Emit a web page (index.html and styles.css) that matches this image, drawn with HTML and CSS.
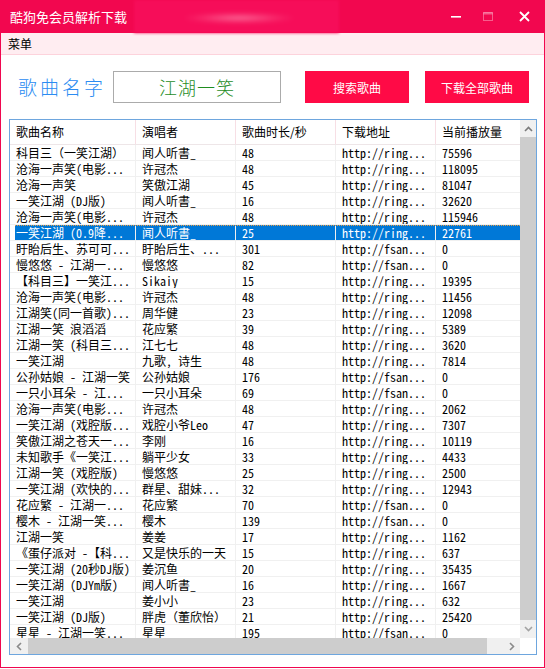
FILE: index.html
```html
<!DOCTYPE html>
<html lang="zh-CN">
<head>
<meta charset="utf-8">
<title>酷狗免会员解析下载</title>
<link rel="stylesheet" href="styles.css">
</head>
<body>
<div class="window">
  <div class="titlebar">
    <span class="title">酷狗免会员解析下载</span>
    <div class="blur"><div class="blur-glow"></div></div>
    <div class="controls">
      <div class="ctl ctl-min"><svg width="10" height="10" viewBox="0 0 10 10"><rect x="0" y="4" width="10" height="1.6" fill="#fff"/></svg></div>
      <div class="ctl ctl-max"><svg width="10" height="10" viewBox="0 0 10 10"><rect x="0.5" y="0.5" width="9" height="8" fill="none" stroke="rgba(255,255,255,0.35)" stroke-width="1"/><rect x="0.5" y="0.5" width="9" height="2" fill="rgba(255,255,255,0.35)"/></svg></div>
      <div class="ctl ctl-close"><svg width="11" height="11" viewBox="0 0 11 11"><path d="M1 1 L10 10 M10 1 L1 10" stroke="#fff" stroke-width="1.8" fill="none"/></svg></div>
    </div>
  </div>
  <div class="menubar"><span class="menu-item">菜单</span></div>
  <div class="content">
    <div class="searchrow">
      <div class="label">歌曲名字</div>
      <div class="textbox">江湖一笑</div>
      <div class="btn btn-search">搜索歌曲</div>
      <div class="btn btn-all">下载全部歌曲</div>
    </div>
    <div class="list">
      <div class="viewport">
        <div class="hrow">
          <div class="hc c1">歌曲名称</div>
          <div class="hc c2">演唱者</div>
          <div class="hc c3">歌曲时长/秒</div>
          <div class="hc c4">下载地址</div>
          <div class="hc c5">当前播放量</div>
        </div>
        <div class="row"><div class="c c1 fw">科目三（一笑江湖）</div><div class="c c2">闻人听書_</div><div class="c c3">48</div><div class="c c4">http://ring...</div><div class="c c5">75596</div></div>
        <div class="row"><div class="c c1">沧海一声笑(电影...</div><div class="c c2">许冠杰</div><div class="c c3">48</div><div class="c c4">http://ring...</div><div class="c c5">118095</div></div>
        <div class="row"><div class="c c1">沧海一声笑</div><div class="c c2">笑傲江湖</div><div class="c c3">45</div><div class="c c4">http://ring...</div><div class="c c5">81047</div></div>
        <div class="row"><div class="c c1">一笑江湖 (DJ版)</div><div class="c c2">闻人听書_</div><div class="c c3">16</div><div class="c c4">http://ring...</div><div class="c c5">32620</div></div>
        <div class="row"><div class="c c1">沧海一声笑(电影...</div><div class="c c2">许冠杰</div><div class="c c3">48</div><div class="c c4">http://ring...</div><div class="c c5">115946</div></div>
        <div class="row sel"><div class="c c1">一笑江湖 (0.9降...</div><div class="c c2">闻人听書_</div><div class="c c3">25</div><div class="c c4">http://ring...</div><div class="c c5">22761</div></div>
        <div class="row"><div class="c c1">盱眙后生、苏可可...</div><div class="c c2">盱眙后生、...</div><div class="c c3">301</div><div class="c c4">http://fsan...</div><div class="c c5">0</div></div>
        <div class="row"><div class="c c1">慢悠悠 - 江湖一...</div><div class="c c2">慢悠悠</div><div class="c c3">82</div><div class="c c4">http://fsan...</div><div class="c c5">0</div></div>
        <div class="row"><div class="c c1">【科目三】一笑江...</div><div class="c c2">Sikaiy</div><div class="c c3">15</div><div class="c c4">http://ring...</div><div class="c c5">19395</div></div>
        <div class="row"><div class="c c1">沧海一声笑(电影...</div><div class="c c2">许冠杰</div><div class="c c3">48</div><div class="c c4">http://ring...</div><div class="c c5">11456</div></div>
        <div class="row"><div class="c c1">江湖笑(同一首歌)...</div><div class="c c2">周华健</div><div class="c c3">23</div><div class="c c4">http://ring...</div><div class="c c5">12098</div></div>
        <div class="row"><div class="c c1">江湖一笑 浪滔滔</div><div class="c c2">花应繁</div><div class="c c3">39</div><div class="c c4">http://ring...</div><div class="c c5">5389</div></div>
        <div class="row"><div class="c c1">江湖一笑 (科目三...</div><div class="c c2">江七七</div><div class="c c3">48</div><div class="c c4">http://ring...</div><div class="c c5">3620</div></div>
        <div class="row"><div class="c c1">一笑江湖</div><div class="c c2">九歌, 诗生</div><div class="c c3">48</div><div class="c c4">http://ring...</div><div class="c c5">7814</div></div>
        <div class="row"><div class="c c1">公孙姑娘 - 江湖一笑</div><div class="c c2">公孙姑娘</div><div class="c c3">176</div><div class="c c4">http://fsan...</div><div class="c c5">0</div></div>
        <div class="row"><div class="c c1">一只小耳朵 - 江...</div><div class="c c2">一只小耳朵</div><div class="c c3">69</div><div class="c c4">http://fsan...</div><div class="c c5">0</div></div>
        <div class="row"><div class="c c1">沧海一声笑(电影...</div><div class="c c2">许冠杰</div><div class="c c3">48</div><div class="c c4">http://ring...</div><div class="c c5">2062</div></div>
        <div class="row"><div class="c c1">一笑江湖 (戏腔版...</div><div class="c c2">戏腔小爷Leo</div><div class="c c3">47</div><div class="c c4">http://ring...</div><div class="c c5">7307</div></div>
        <div class="row"><div class="c c1">笑傲江湖之苍天一...</div><div class="c c2">李刚</div><div class="c c3">16</div><div class="c c4">http://ring...</div><div class="c c5">10119</div></div>
        <div class="row"><div class="c c1">未知歌手《一笑江...</div><div class="c c2">躺平少女</div><div class="c c3">33</div><div class="c c4">http://ring...</div><div class="c c5">4433</div></div>
        <div class="row"><div class="c c1">江湖一笑 (戏腔版)</div><div class="c c2">慢悠悠</div><div class="c c3">25</div><div class="c c4">http://ring...</div><div class="c c5">2500</div></div>
        <div class="row"><div class="c c1">一笑江湖 (欢快的...</div><div class="c c2">群星、甜妹...</div><div class="c c3">32</div><div class="c c4">http://ring...</div><div class="c c5">12943</div></div>
        <div class="row"><div class="c c1">花应繁 - 江湖一...</div><div class="c c2">花应繁</div><div class="c c3">70</div><div class="c c4">http://fsan...</div><div class="c c5">0</div></div>
        <div class="row"><div class="c c1">樱木 - 江湖一笑...</div><div class="c c2">樱木</div><div class="c c3">139</div><div class="c c4">http://fsan...</div><div class="c c5">0</div></div>
        <div class="row"><div class="c c1">江湖一笑</div><div class="c c2">姜姜</div><div class="c c3">17</div><div class="c c4">http://ring...</div><div class="c c5">1162</div></div>
        <div class="row"><div class="c c1">《蛋仔派对 -【科...</div><div class="c c2">又是快乐的一天</div><div class="c c3">15</div><div class="c c4">http://ring...</div><div class="c c5">637</div></div>
        <div class="row"><div class="c c1">一笑江湖 (20秒DJ版)</div><div class="c c2">姜沉鱼</div><div class="c c3">20</div><div class="c c4">http://ring...</div><div class="c c5">35435</div></div>
        <div class="row"><div class="c c1">一笑江湖 (DJYm版)</div><div class="c c2">闻人听書_</div><div class="c c3">16</div><div class="c c4">http://ring...</div><div class="c c5">1667</div></div>
        <div class="row"><div class="c c1">一笑江湖</div><div class="c c2">姜小小</div><div class="c c3">23</div><div class="c c4">http://ring...</div><div class="c c5">632</div></div>
        <div class="row"><div class="c c1">一笑江湖 (DJ版)</div><div class="c c2 fw">胖虎（董欣怡）</div><div class="c c3">21</div><div class="c c4">http://ring...</div><div class="c c5">25420</div></div>
        <div class="row"><div class="c c1">星星 - 江湖一笑...</div><div class="c c2">星星</div><div class="c c3">195</div><div class="c c4">http://fsan...</div><div class="c c5">0</div></div>
      </div>
      <div class="vscroll">
        <div class="sb-btn sb-up"><svg width="9" height="6" viewBox="0 0 9 6"><path d="M1 5 L4.5 1.5 L8 5" stroke="#7a7a7a" stroke-width="1.6" fill="none"/></svg></div>
        <div class="vthumb"></div>
        <div class="sb-btn sb-down"><svg width="9" height="6" viewBox="0 0 9 6"><path d="M1 1 L4.5 4.5 L8 1" stroke="#a3a3a3" stroke-width="1.6" fill="none"/></svg></div>
      </div>
      <div class="hscroll">
        <div class="sb-btn sb-left"><svg width="6" height="9" viewBox="0 0 6 9"><path d="M5 1 L1.5 4.5 L5 8" stroke="#8a8a8a" stroke-width="1.6" fill="none"/></svg></div>
        <div class="hthumb"></div>
        <div class="htrack"></div>
        <div class="sb-btn sb-right"><svg width="6" height="9" viewBox="0 0 6 9"><path d="M1 1 L4.5 4.5 L1 8" stroke="#8a8a8a" stroke-width="1.6" fill="none"/></svg></div>
      </div>
      <div class="corner"></div>
    </div>
  </div>
</div>
</body>
</html>
```
FILE: styles.css
```css
html, body {
  margin: 0;
  padding: 0;
  background: #ffffff;
}

body {
  font-family: "Noto Sans CJK SC", "Noto Sans", sans-serif;
  font-size: 12px;
  color: #000;
}

.window {
  width: 545px;
  height: 668px;
  box-sizing: border-box;
  border: 1px solid #f0074f;
  border-top: 0;
  display: flex;
  flex-direction: column;
  background: #fff;
}

.titlebar {
  height: 33px;
  flex: none;
  margin: 0 -1px;
  background: #f2074f;
  display: flex;
  align-items: center;
  position: relative;
}

.title {
  margin-left: 10px;
  color: #fff;
  font-size: 13px;
  line-height: 16px;
  position: relative;
  z-index: 2;
}

.blur {
  position: absolute;
  left: 134px;
  top: 0;
  width: 205px;
  height: 33px;
  background: #f60d59;
  filter: blur(1.5px);
  z-index: 1;
}

.blur-glow {
  position: absolute;
  left: 50px;
  top: 13px;
  width: 110px;
  height: 10px;
  background: radial-gradient(ellipse at center, rgba(255,200,215,0.55) 0%, rgba(255,120,160,0.25) 50%, rgba(255,255,255,0) 75%);
  filter: blur(2px);
}

.controls {
  margin-left: auto;
  display: flex;
  height: 33px;
  position: relative;
  z-index: 2;
}

.ctl {
  display: flex;
  align-items: center;
  justify-content: center;
  height: 33px;
}

.ctl-min { width: 32px; }
.ctl-max { width: 31px; }
.ctl-close { width: 42px; }

.menubar {
  height: 21px;
  flex: none;
  background: #ffedf1;
  border-bottom: 1px solid #fdd3dc;
  display: flex;
  align-items: center;
  padding-left: 7px;
}

.menu-item {
  font-size: 12px;
  line-height: 14px;
}

.content {
  flex: 1;
  display: flex;
  flex-direction: column;
  padding-top: 16px;
}

.searchrow {
  display: flex;
  align-items: center;
  height: 32px;
}

.label {
  width: 112px;
  box-sizing: border-box;
  padding-left: 17px;
  font-size: 19px;
  font-weight: 300;
  letter-spacing: 3px;
  color: #2b8cf2;
  line-height: 24px;
  white-space: nowrap;
}

.textbox {
  width: 168px;
  height: 32px;
  box-sizing: border-box;
  border: 1px solid #ababab;
  display: flex;
  align-items: center;
  justify-content: center;
  font-size: 18px;
  font-weight: 300;
  letter-spacing: 1px;
  color: #1f8d1f;
  margin-right: 24px;
}

.btn {
  width: 104px;
  height: 32px;
  background: #ff0a46;
  color: #fff;
  display: flex;
  align-items: center;
  justify-content: center;
  font-size: 12px;
}

.btn-all {
  margin-left: 16px;
}

.list {
  margin-top: 16px;
  margin-left: 8px;
  width: 528px;
  height: 536px;
  box-sizing: border-box;
  border: 1px solid #6ea6de;
  display: grid;
  grid-template-columns: 510px 16px;
  grid-template-rows: 518px 16px;
}

.viewport {
  overflow: hidden;
  background: #fff;
}

.hrow {
  display: flex;
  height: 25px;
  box-sizing: border-box;
  border-bottom: 1px solid #eee6e8;
}

.hc {
  flex: none;
  box-sizing: border-box;
  border-right: 1px solid #f7dfe5;
  padding-left: 6px;
  line-height: 24px;
  font-size: 12px;
  white-space: nowrap;
  overflow: hidden;
}

.c1 { width: 126px; }
.c2 { width: 100px; }
.c3 { width: 100px; }
.c4 { width: 100px; }
.c5 { width: 100px; }

.row {
  display: flex;
  height: 16px;
  box-sizing: border-box;
  border-bottom: 1px solid #f0f0f0;
  position: relative;
}

.c {
  flex: none;
  box-sizing: border-box;
  border-right: 1px solid #f0f0f0;
  padding-left: 6px;
  line-height: 15px;
  font-size: 12px;
  font-feature-settings: "hwid" 1;
  white-space: nowrap;
  overflow: hidden;
}

.c.fw {
  font-feature-settings: normal;
}

.row.sel .c {
  background: #0078d7;
  color: #fff;
}

.row.sel .c1 {
  background: linear-gradient(to right, #ffffff 5px, #0078d7 5px);
}

.row.sel::before {
  content: "";
  position: absolute;
  left: 5px;
  right: 0;
  top: 0;
  border-top: 1px dotted #e9a04a;
}

.vscroll {
  display: flex;
  flex-direction: column;
  background: #f0f0f0;
}

.sb-btn {
  display: flex;
  align-items: center;
  justify-content: center;
  background: #f0f0f0;
  flex: none;
}

.sb-up { height: 17px; }
.sb-down { height: 18px; }

.vthumb {
  height: 483px;
  background: #cdcdcd;
  flex: none;
}

.hscroll {
  display: flex;
  background: #f0f0f0;
}

.sb-left { width: 18px; }
.sb-right { width: 17px; }

.hthumb {
  width: 459px;
  background: #cdcdcd;
  flex: none;
}

.htrack {
  width: 16px;
  flex: none;
}

.corner {
  background: #ffffff;
}
```
